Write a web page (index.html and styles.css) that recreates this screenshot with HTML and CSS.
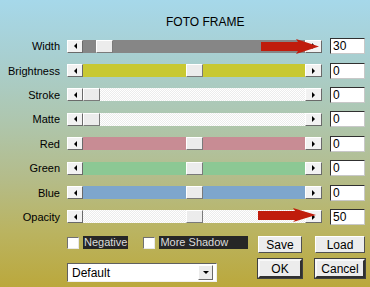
FILE: index.html
```html
<!DOCTYPE html>
<html>
<head>
    <title>Foto Frame</title>
    <link rel="stylesheet" href="styles.css">
</head>
<body>
    <div class="dialog">
        <div class="title">FOTO FRAME</div>

        <div class="rows">
            <div class="row">
                <span class="label">Width</span>
                <div class="slider">
                    <span class="arrow left"></span>
                    <div class="track gray"><span class="thumb" style="--pos:0.063"></span></div>
                    <span class="arrow right"></span>
                </div>
                <span class="value">30</span>
            </div>
            <div class="row">
                <span class="label">Brightness</span>
                <div class="slider">
                    <span class="arrow left"></span>
                    <div class="track yellow"><span class="thumb" style="--pos:0.5"></span></div>
                    <span class="arrow right"></span>
                </div>
                <span class="value">0</span>
            </div>
            <div class="row">
                <span class="label">Stroke</span>
                <div class="slider">
                    <span class="arrow left"></span>
                    <div class="track white"><span class="thumb" style="--pos:0"></span></div>
                    <span class="arrow right"></span>
                </div>
                <span class="value">0</span>
            </div>
            <div class="row">
                <span class="label">Matte</span>
                <div class="slider">
                    <span class="arrow left"></span>
                    <div class="track white"><span class="thumb" style="--pos:0"></span></div>
                    <span class="arrow right"></span>
                </div>
                <span class="value">0</span>
            </div>
            <div class="row">
                <span class="label">Red</span>
                <div class="slider">
                    <span class="arrow left"></span>
                    <div class="track red"><span class="thumb" style="--pos:0.5"></span></div>
                    <span class="arrow right"></span>
                </div>
                <span class="value">0</span>
            </div>
            <div class="row">
                <span class="label">Green</span>
                <div class="slider">
                    <span class="arrow left"></span>
                    <div class="track green"><span class="thumb" style="--pos:0.5"></span></div>
                    <span class="arrow right"></span>
                </div>
                <span class="value">0</span>
            </div>
            <div class="row">
                <span class="label">Blue</span>
                <div class="slider">
                    <span class="arrow left"></span>
                    <div class="track blue"><span class="thumb" style="--pos:0.5"></span></div>
                    <span class="arrow right"></span>
                </div>
                <span class="value">0</span>
            </div>
            <div class="row">
                <span class="label">Opacity</span>
                <div class="slider">
                    <span class="arrow left"></span>
                    <div class="track white"><span class="thumb" style="--pos:0.5"></span></div>
                    <span class="arrow right"></span>
                </div>
                <span class="value">50</span>
            </div>
        </div>

        <div class="bottom">
            <div class="options">
                <div class="checks">
                    <span class="check"><span class="box"></span><span class="check-label">Negative</span></span>
                    <span class="check"><span class="box"></span><span class="check-label">More Shadow</span></span>
                </div>
                <div class="select">
                    <span class="select-text">Default</span>
                    <span class="select-btn"></span>
                </div>
            </div>
            <div class="buttons">
                <span class="btn">Save</span>
                <span class="btn">Load</span>
                <span class="btn strong">OK</span>
                <span class="btn strong">Cancel</span>
            </div>
        </div>

        <!-- red pointer arrows -->
        <svg class="pointer p-width" width="60" height="16" viewBox="0 0 60 16">
            <polygon points="0,3 37,3 35,0 58,7.5 35,15 37,12 0,12" fill="#c01c0c"/>
        </svg>
        <svg class="pointer p-opacity" width="60" height="16" viewBox="0 0 60 16">
            <polygon points="0,3 37,3 35,0 58,7 35,14 37,12 0,12" fill="#c01c0c"/>
        </svg>
    </div>
</body>
</html>
```

FILE: styles.css
```css
body {
    margin: 0;
    font-family: "Liberation Sans", Arial, sans-serif;
    font-size: 11px;
    color: #000;
}
.dialog {
    position: relative;
    width: 370px;
    height: 287px;
    box-sizing: border-box;
    padding-top: 15px;
    background: linear-gradient(180deg, #a6d8ea 0%, #a8cfd0 20%, #aec6ae 42%, #b4bc8a 62%, #bab462 80%, #bba83c 100%);
    overflow: hidden;
}
.title {
    padding-left: 166px;
    font-size: 12px;
    height: 19px;
    line-height: 14px;
}
.rows {
    display: flex;
    flex-direction: column;
}
.row {
    display: flex;
    align-items: center;
    height: 24.4px;
}
.label {
    width: 60px;
    text-align: right;
    margin-right: 7px;
}
.slider {
    display: flex;
    width: 255px;
    height: 13px;
}
.arrow {
    width: 16px;
    height: 13px;
    box-sizing: border-box;
    background: #f2f2f2;
    border-top: 1px solid #fff;
    border-left: 1px solid #fff;
    border-right: 1px solid #6a6a6a;
    border-bottom: 1px solid #6a6a6a;
    display: flex;
    align-items: center;
    justify-content: center;
}
.arrow.right {
    width: 17px;
}
.arrow::before {
    content: "";
    border-top: 3px solid transparent;
    border-bottom: 3px solid transparent;
}
.arrow.left::before {
    border-right: 3px solid #000;
}
.arrow.right::before {
    border-left: 3px solid #000;
}
.track {
    position: relative;
    flex: 1;
}
.track.gray { background: #868686; }
.track.yellow { background: #c8c832; }
.track.red { background: #c88c94; }
.track.green { background: #8cc894; }
.track.blue { background: #7ea6cc; }
.track.white {
    background: repeating-conic-gradient(#ffffff 0 25%, #ececec 0 50%) 0 0 / 2px 2px;
}
.thumb {
    position: absolute;
    top: 0;
    left: calc((100% - 17px) * var(--pos));
    width: 17px;
    height: 13px;
    box-sizing: border-box;
    background: #ececec;
    border-top: 1px solid #fff;
    border-left: 1px solid #fff;
    border-right: 1px solid #7a7a7a;
    border-bottom: 1px solid #7a7a7a;
}
.value {
    margin-left: 8px;
    width: 35px;
    height: 16px;
    box-sizing: border-box;
    background: #fff;
    border: 1px solid;
    border-color: #303030 #c8c8c8 #c8c8c8 #303030;
    padding-left: 2px;
    line-height: 14px;
    font-size: 12px;
}
.bottom {
    display: flex;
    margin-top: 7px;
    padding-left: 67px;
}
.options {
    width: 191px;
}
.checks {
    display: flex;
    gap: 15px;
    height: 13px;
}
.check {
    display: flex;
    align-items: center;
    gap: 4px;
}
.box {
    width: 12px;
    height: 12px;
    box-sizing: border-box;
    background: #fff;
    border: 1px solid;
    border-color: #707070 #e8e8e8 #e8e8e8 #707070;
}
.check-label {
    background: #262626;
    color: #dcdcdc;
    height: 13px;
    line-height: 13px;
    padding: 0 1px;
}
.check + .check .check-label {
    width: 87px;
}
.select {
    display: flex;
    align-items: center;
    margin-top: 14px;
    width: 150px;
    height: 19px;
    box-sizing: border-box;
    background: #fff;
    border: 1px solid;
    border-color: #606060 #f0f0f0 #f0f0f0 #606060;
    padding-right: 3px;
}
.select-text {
    flex: 1;
    padding-left: 4px;
    font-size: 12px;
}
.select-btn {
    width: 15px;
    height: 15px;
    box-sizing: border-box;
    background: #ececec;
    border: 1px solid;
    border-color: #fff #6a6a6a #6a6a6a #fff;
    display: flex;
    align-items: center;
    justify-content: center;
}
.select-btn::before {
    content: "";
    border-left: 3px solid transparent;
    border-right: 3px solid transparent;
    border-top: 3px solid #000;
}
.buttons {
    display: grid;
    grid-template-columns: 44px 50px;
    grid-template-rows: 17px 19px;
    column-gap: 13px;
    row-gap: 6px;
}
.btn {
    display: flex;
    align-items: center;
    justify-content: center;
    box-sizing: border-box;
    background: #ececec;
    border: 1px solid;
    border-color: #fff #505050 #505050 #fff;
    font-size: 12px;
}
.btn.strong {
    border: 2px solid;
    border-color: #f8f8f8 #303030 #303030 #f8f8f8;
    box-shadow: 0 0 0 1px #404040;
}
.pointer {
    position: absolute;
}
.p-width {
    left: 261px;
    top: 39px;
}
.p-opacity {
    left: 258px;
    top: 208px;
}
```
